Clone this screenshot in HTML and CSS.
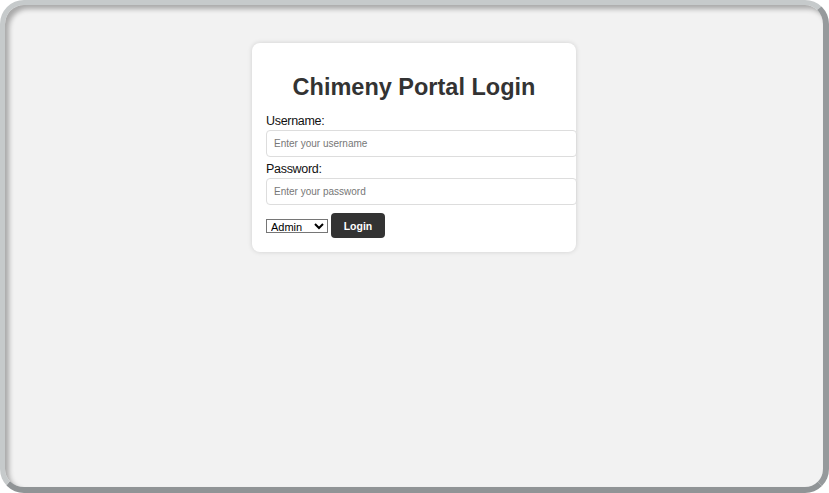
FILE: index.html
```html
<!DOCTYPE html>
<html lang="en">
<head>
<meta charset="utf-8">
<title>Chimeny Portal Login</title>
<link rel="stylesheet" href="styles.css">
</head>
<body>
<div class="frame">
  <div class="card">
    <h1 class="title">Chimeny Portal Login</h1>
    <form class="form">
      <label class="label" for="user">Username:</label>
      <input class="field" id="user" type="text" placeholder="Enter your username">
      <label class="label" for="pass">Password:</label>
      <input class="field" id="pass" type="password" placeholder="Enter your password">
      <div class="actions">
        <select class="role">
          <option>Admin</option>
          <option>User</option>
        </select>
        <button class="btn" type="button">Login</button>
      </div>
    </form>
  </div>
</div>
</body>
</html>
```
FILE: styles.css
```css
html, body {
  margin: 0;
  padding: 0;
  height: 100%;
}
body {
  font-family: "Liberation Sans", Arial, sans-serif;
  background: #ffffff;
}
.frame {
  box-sizing: border-box;
  width: 829px;
  height: 493px;
  border-radius: 24px;
  border-style: solid;
  border-width: 5px 6px 6px 5px;
  border-color: #c6cacb #969a9c #909496 #c6cacb;
  background: #f2f2f2;
  box-shadow: inset 4px 4px 5px rgba(0, 0, 0, 0.3);
  display: flex;
  justify-content: center;
  padding-top: 38px;
}
.card {
  width: 324px;
  height: 209px;
  box-sizing: border-box;
  background: #ffffff;
  border-radius: 8px;
  box-shadow: 0 0 5px rgba(0, 0, 0, 0.14);
  padding: 29px 14px 0 14px;
}
.title {
  margin: 0 0 11px 0;
  text-align: center;
  font-size: 23.5px;
  font-weight: bold;
  color: #333333;
  line-height: 30px;
}
.form {
  display: flex;
  flex-direction: column;
}
.label {
  font-size: 12.5px;
  letter-spacing: -0.3px;
  color: #111111;
  line-height: 17px;
}
.field {
  box-sizing: border-box;
  width: 311px;
  height: 27px;
  margin: 0 0 4px 0;
  padding: 0 7px;
  border: 1px solid #dddddd;
  border-radius: 4px;
  font-family: "Liberation Sans", Arial, sans-serif;
  font-size: 10px;
  color: #333;
  background: #fff;
}
.field::placeholder {
  color: #777777;
}
.actions {
  display: flex;
  align-items: center;
  gap: 3px;
  margin-top: 4px;
}
.role {
  width: 62px;
  height: 14px;
  font-family: "Liberation Sans", Arial, sans-serif;
  font-size: 11px;
  padding: 0;
  border: 1px solid #767676;
  border-radius: 0;
  background: #fff;
  color: #000;
}
.btn {
  width: 54px;
  height: 25px;
  border: none;
  border-radius: 4px;
  background: #333333;
  color: #ffffff;
  font-family: "Liberation Sans", Arial, sans-serif;
  font-weight: bold;
  font-size: 10.5px;
}
```
